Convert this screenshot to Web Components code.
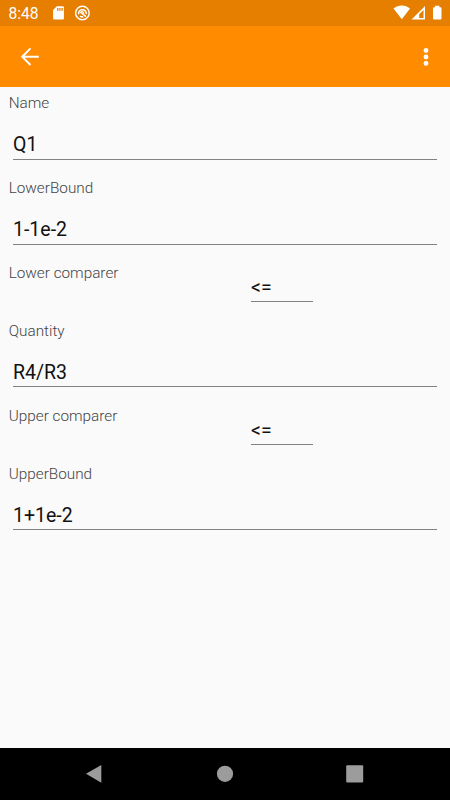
<!DOCTYPE html>
<html lang="en">
<head>
<meta charset="utf-8">
<title>Quantity</title>
<style>
html,body{margin:0;height:100%;overflow:hidden}
body{font-family:Roboto,"Noto Sans",sans-serif;background:#fafafa}
</style>
</head>
<body>
<app-screen></app-screen>
<script>
const define = (name, html) => customElements.define(name, class extends HTMLElement {
  constructor() {
    super();
    const t = document.createElement('template');
    t.innerHTML = html;
    this.attachShadow({mode: 'open'}).append(t.content.cloneNode(true));
  }
});

define('status-bar', `<style>
:host{display:flex;height:26px;background:#e67e00;color:#fff;justify-content:space-between}
.time{font-size:15.6px;line-height:26px;padding:1px 0 0 8.5px;width:52px;box-sizing:border-box;white-space:nowrap}
.left{display:flex}
svg{display:block}
</style>
<div class="left"><div class="time">8:48</div>
<svg width="42" height="26" fill="#fff"><path fill-rule="evenodd" d="M4.8 6.3h6.1q1 0 1 1v11.2q0 1-1 1H2.1q-1 0-1-1V10zM5.1 8v2.7h1.3V8zM7.3 8v2.7h1.3V8zM9.5 8v2.7h1.3V8z"/>
<g transform="translate(30.4 13)" fill="none" stroke="#fff"><circle r="6.8" stroke-width="1.5"/><path stroke-width="1.5" d="M-3.8 1.2C-4.4-4.8 4.2-4.8 3.9 1M-2.4 3.2C-1.4 3.9-.2 4 .8 3.7M-2.2-1L3.6 3.6"/><path stroke-width="1.2" d="M-1.6-.8C-.4-1.8 1.2-1.2 1.4.6"/></g></svg></div>
<svg width="60" height="26" fill="#fff"><path d="M3.5 8.6C8.4 4.4 15.1 4.4 20 8.6L11.8 19.3z"/><path fill-rule="evenodd" d="M21.5 19.4L35 6.1v13.3zM29.2 18h4.3V9.9l-4.3 4.3z"/><path d="M45 7.2V5.8h4.4v1.4h1q1.1 0 1.1 1.1v10q0 1.2-1.1 1.2h-6.3q-1.1 0-1.1-1.2v-10q0-1.1 1.1-1.1z"/></svg>`);

define('tool-bar', `<style>
:host{display:flex;height:61px;background:#ff8c00;justify-content:space-between;align-items:flex-start}
svg{display:block}
</style>
<svg width="60" height="61" fill="none" stroke="#fff" stroke-width="2"><path d="M38.8 30.7H22.7M30.5 22.4L22.2 30.7L30.5 39"/></svg>
<svg width="48" height="61" fill="#fff"><circle cx="24" cy="24.5" r="2.4"/><circle cx="24" cy="31" r="2.4"/><circle cx="24" cy="37.4" r="2.4"/></svg>`);

define('text-field', `<style>
:host{display:block;height:84.9px}
.label{font-size:15.3px;line-height:20px;color:#444;padding-left:8.7px;font-weight:300}
.value{margin:16px 13px 0;height:30px;line-height:32px;font-size:19.5px;color:#111;border-bottom:1px solid #828282}
:host([snug]) .value{height:29px}
</style>
<div class="label"><slot name="label"></slot></div><div class="value"><slot></slot></div>`);

define('compare-field', `<style>
:host{display:grid;grid-template-columns:251px 62px;height:58px}
.label{font-size:15.3px;line-height:20px;color:#444;padding-left:8.7px;font-weight:300}
.value{margin-top:9px;height:29px;line-height:32px;font-size:19.5px;color:#111;border-bottom:1px solid #828282}
</style>
<div class="label"><slot name="label"></slot></div><div class="value"><slot></slot></div>`);

define('nav-bar', `<style>
:host{display:block;height:52px;background:#000}
svg{display:block}
</style>
<svg width="450" height="52" fill="#9c9c9c"><path d="M86 25.7L101.3 17v17.7z"/><circle cx="225" cy="25.8" r="8.1"/><rect x="346.2" y="17.2" width="17" height="17.4" rx="1"/></svg>`);

define('app-screen', `<style>
:host{display:flex;flex-direction:column;width:450px;height:800px;background:#fafafa}
main{flex:1;padding-top:6px}
</style>
<status-bar></status-bar><tool-bar></tool-bar>
<main>
<text-field><span slot="label">Name</span>Q1</text-field>
<text-field><span slot="label">LowerBound</span>1-1e-2</text-field>
<compare-field><span slot="label">Lower comparer</span>&lt;=</compare-field>
<text-field snug><span slot="label">Quantity</span>R4/R3</text-field>
<compare-field><span slot="label">Upper comparer</span>&lt;=</compare-field>
<text-field snug><span slot="label">UpperBound</span>1+1e-2</text-field>
</main>
<nav-bar></nav-bar>`);
</script>
</body>
</html>
